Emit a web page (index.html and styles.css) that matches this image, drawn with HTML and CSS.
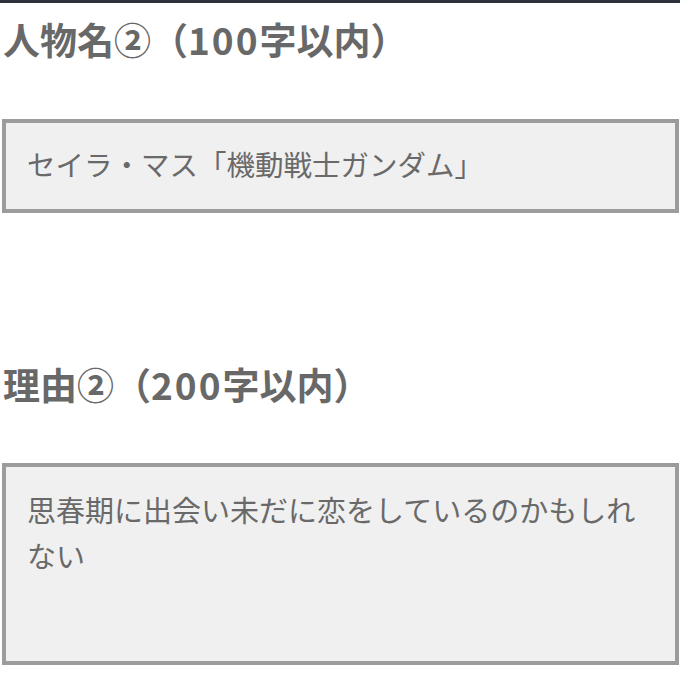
FILE: index.html
```html
<!doctype html>
<html>
<head>
<meta charset="utf-8">
<title>人物名と理由</title>
<link rel="stylesheet" href="styles.css">
</head>
<body>
<div class="topbar"></div>
<div class="form">
	<h2 class="label first">人物名②（<span class="num">100</span>字以内）</h2>
	<div class="field name">セイラ・マス「機動戦士ガンダム」</div>
	<h2 class="label second">理由②（<span class="num">200</span>字以内）</h2>
	<div class="field reason">思春期に出会い未だに恋をしているのかもしれない</div>
</div>
</body>
</html>
```

FILE: styles.css
```css
*{
	margin:0;
	padding:0;
	box-sizing:border-box;
}
body{
	background:#fff;
	font-family:"Noto Sans CJK JP","Noto Sans",sans-serif;
	color:#666;
}
.topbar{
	height:3px;
	background:#2c313c;
}
.form{
	padding:0 1px 0 2px;
}
.label{
	font-size:37px;
	font-weight:700;
	line-height:50px;
	color:#686868;
	padding-left:1px;
}
.label .num{
	letter-spacing:2px;
}
.label.first{
	margin-top:11px;
	margin-bottom:55px;
}
.label.second{
	margin-top:146px;
	margin-bottom:54px;
}
.field{
	border:4px solid #9c9c9c;
	background:#f0f0f0;
	font-size:28.5px;
	line-height:46px;
	color:#696969;
	padding:19px 20px 0 21px;
}
.field.name{
	height:94px;
	padding-top:18px;
}
.field.reason{
	height:202px;
	font-size:29px;
}
```
